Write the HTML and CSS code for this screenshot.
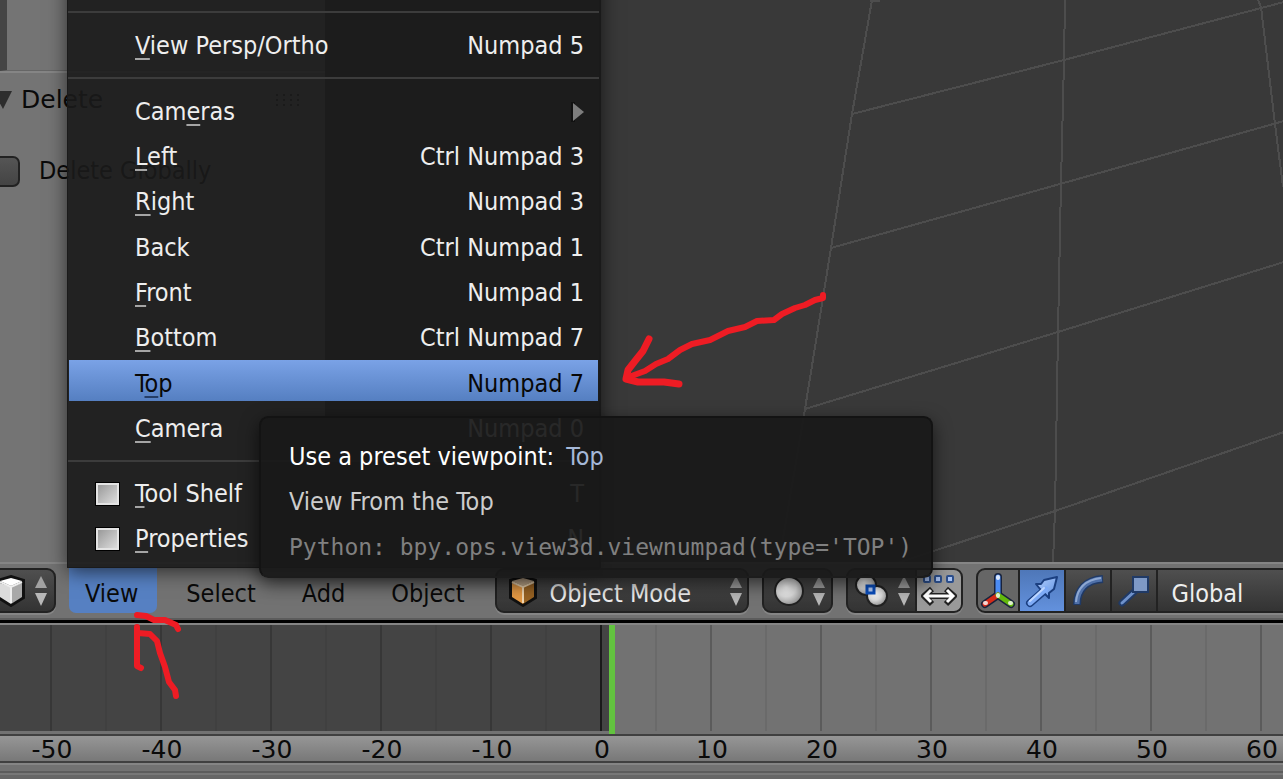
FILE: index.html
```html
<!DOCTYPE html>
<html lang="en">
<head>
<meta charset="utf-8">
<title>3D View</title>
<link rel="stylesheet" href="styles.css">
</head>
<body>
<svg class="defs" width="0" height="0" aria-hidden="true">
  <defs>
    <linearGradient id="blue" x1="0" y1="0" x2="1" y2="1"><stop offset="0" stop-color="#b4d0ff"/><stop offset="1" stop-color="#5c8fe0"/></linearGradient>
    <radialGradient id="ball" cx=".4" cy=".35" r=".7"><stop offset="0" stop-color="#fff"/><stop offset=".5" stop-color="#ddd"/><stop offset="1" stop-color="#888"/></radialGradient>
    <symbol id="updown" viewBox="0 0 14 32"><path d="M7 1L13 13H1Z" fill="#a2a2a2"/><path d="M1 18H13L7 31Z" fill="#b8b8b8"/></symbol>
    <symbol id="cube" viewBox="0 0 30 32"><path d="M15 1L28 5V23L15 31L2 23V5Z" fill="#111" stroke="#111" stroke-width="2"/><path d="M15 3L26 6L15 11L4 6Z" fill="var(--top)"/><path d="M4 8L15 12V29L4 22Z" fill="var(--left)"/><path d="M15 12L26 8V22L15 29Z" fill="var(--right)"/><path d="M4 7L15 12L26 7M15 12V28" fill="none" stroke="var(--edge)" stroke-width="2"/></symbol>
  </defs>
</svg>

<main class="view3d">
  <aside class="shelf">
    <div class="shelf-top"></div>
    <section class="panel">
      <h2 class="panel-title">
        <svg class="fold" width="13" height="18" viewBox="0 0 13 18"><path d="M-7 0H12L3 18Z" fill="#2d2d2d"/></svg>
        <span>Delete</span>
        <svg class="grip" width="26" height="14" viewBox="0 0 26 14"><path d="M1 2H26M1 7H26M1 12H26" stroke="#222" stroke-width="2" stroke-dasharray="2 5"/></svg>
      </h2>
      <label class="option"><input type="checkbox" class="tick"><span>Delete Globally</span></label>
    </section>
  </aside>
  <svg class="grid" aria-hidden="true">
    <g transform="translate(-325 0)" fill="none" stroke="#4d4d4d" stroke-width="2" shape-rendering="crispEdges">
      <path d="M872 0L852 114L831 248L805 409L779 562M1065 0L1064 60L1061 183L1058 332L1055 511L1053 562M1258 0L1261 7L1275 124L1283 187"/>
      <path d="M870 1H880M852 114L1064 60L1284 2M831 248L1060 184L1284 121M805 409L1058 332L1284 262M870 572L1055 511L1284 432"/>
    </g>
  </svg>
</main>

<header class="header">
  <button class="ctl editor-type" aria-label="Editor type">
    <svg class="cube-grey" width="30" height="32"><use href="#cube"/></svg>
    <svg width="14" height="32"><use href="#updown"/></svg>
  </button>
  <nav class="menus">
    <div class="menu-anchor">
      <button class="menu-btn open" aria-expanded="true">View</button>
      <div class="menu" role="menu">
        <hr>
        <button class="item solo"><span><u>V</u>iew Persp/Ortho</span><kbd>Numpad 5</kbd></button>
        <hr>
        <div class="views">
          <button class="item"><span>Cam<u>e</u>ras</span><svg width="13" height="20" viewBox="0 0 13 20"><path d="M0 0H4V20H0Z" fill="#111"/><path d="M2 1L13 10L2 19Z" fill="#7d7d7d"/></svg></button>
          <button class="item"><span><u>L</u>eft</span><kbd>Ctrl Numpad 3</kbd></button>
          <button class="item"><span><u>R</u>ight</span><kbd>Numpad 3</kbd></button>
          <button class="item"><span>Back</span><kbd>Ctrl Numpad 1</kbd></button>
          <button class="item"><span><u>F</u>ront</span><kbd>Numpad 1</kbd></button>
          <button class="item"><span><u>B</u>ottom</span><kbd>Ctrl Numpad 7</kbd></button>
          <button class="item active" aria-describedby="tip"><span>T<u>o</u>p</span><kbd>Numpad 7</kbd></button>
          <button class="item"><span><u>C</u>amera</span><kbd>Numpad 0</kbd></button>
        </div>
        <hr>
        <label class="item check"><input type="checkbox"><span><u>T</u>ool Shelf</span><kbd>T</kbd></label>
        <label class="item check"><input type="checkbox"><span><u>P</u>roperties</span><kbd>N</kbd></label>
        <div class="tooltip" role="tooltip" id="tip">
          <p class="tip-title">Use a preset viewpoint: <b>Top</b></p>
          <p class="tip-text">View From the Top</p>
          <p class="tip-code">Python: bpy.ops.view3d.viewnumpad(type='TOP')</p>
        </div>
      </div>
    </div>
    <button class="menu-btn">Select</button>
    <button class="menu-btn">Add</button>
    <button class="menu-btn">Object</button>
  </nav>
  <div class="ctl mode">
    <svg class="cube-orange" width="30" height="32"><use href="#cube"/></svg>
    <select aria-label="Interaction mode"><option>Object Mode</option></select>
    <svg width="14" height="32"><use href="#updown"/></svg>
  </div>
  <button class="ctl shading" aria-label="Viewport shading">
    <svg width="30" height="30" viewBox="0 0 30 30"><circle cx="15" cy="15" r="14" fill="url(#ball)" stroke="#222" stroke-width="2"/></svg>
    <svg width="14" height="32"><use href="#updown"/></svg>
  </button>
  <div class="group">
    <button class="ctl pivot" aria-label="Pivot point">
      <svg width="34" height="34" viewBox="0 0 34 34"><circle cx="11" cy="11" r="10" fill="url(#ball)" stroke="#222" stroke-width="2"/><circle cx="22" cy="22" r="10" fill="url(#ball)" stroke="#222" stroke-width="2"/><rect x="12" y="12" width="7" height="7" fill="#b9d2ff" stroke="#0a4fc0" stroke-width="3"/></svg>
      <svg width="14" height="32"><use href="#updown"/></svg>
    </button>
    <button class="ctl centers" aria-label="Manipulate center points">
      <svg width="36" height="36" viewBox="0 0 36 36"><g fill="#a9c4f5" stroke="#2c4f8c" stroke-width="2"><rect x="3" y="3" width="6" height="6" rx="1"/><rect x="14" y="3" width="6" height="6" rx="1"/><rect x="26" y="3" width="6" height="6" rx="1"/></g><path d="M11 16L3 23L11 31M25 16L33 23L25 31M4 23H32" fill="none" stroke="#222" stroke-width="6" stroke-linejoin="round"/><path d="M10 17L4 23L10 29M26 17L32 23L26 29M5 23H31" fill="none" stroke="#fff" stroke-width="3"/></svg>
    </button>
  </div>
  <div class="group wide">
    <button class="ctl axes" aria-label="Manipulator">
      <svg width="36" height="38" viewBox="0 0 36 38" fill="none" stroke-linecap="round"><path d="M18 5V22M18 23L5 32M18 23L31 32" stroke="#19233c" stroke-width="8"/><path d="M18 5V22" stroke="#4b8cf5" stroke-width="5"/><path d="M18 23L5 32" stroke="#d42a18" stroke-width="5"/><path d="M18 23L31 32" stroke="#62b80c" stroke-width="5"/><path d="M18 5V6M5 31L6 31M30 31L31 31M18 23V24" stroke="#ffffffcc" stroke-width="4"/></svg>
    </button>
    <button class="ctl on" aria-label="Translate">
      <svg width="34" height="36" viewBox="0 0 34 36" fill="none" stroke-linejoin="round" stroke-linecap="round"><path d="M5 30L20 17" stroke="#1b3f80" stroke-width="8"/><path d="M11 11L16 11L19 7L32 4L29 16L24 20V25L19 20L15 16Z" fill="url(#blue)" stroke="#1b3f80" stroke-width="2"/><path d="M5 30L21 16" stroke="#7eabf6" stroke-width="5"/><path d="M5 28L19 15" stroke="#bed6ff" stroke-width="2"/></svg>
    </button>
    <button class="ctl" aria-label="Rotate">
      <svg width="34" height="36" viewBox="0 0 34 36" fill="none"><path d="M6 32C6 17 15 7 32 6" stroke="#203a66" stroke-width="8"/><path d="M6 31C6 17 15 7 31 6" stroke="#4f70a8" stroke-width="5"/><path d="M5 29C6 16 14 7 30 5" stroke="#8ea8d2" stroke-width="2"/></svg>
    </button>
    <button class="ctl" aria-label="Scale">
      <svg width="34" height="36" viewBox="0 0 34 36" fill="none" stroke-linecap="round"><path d="M5 30L18 18" stroke="#203a66" stroke-width="7"/><path d="M5 30L18 18" stroke="#6f92cb" stroke-width="3"/><rect x="16" y="4" width="15" height="15" fill="#7e99c6" stroke="#203a66" stroke-width="2"/></svg>
    </button>
    <div class="ctl orient"><select aria-label="Transform orientation"><option>Global</option></select></div>
  </div>
</header>

<section class="timeline">
  <div class="track">
    <div class="before"></div>
    <div class="frame"></div>
  </div>
  <div class="ruler">
    <span>-50</span><span>-40</span><span>-30</span><span>-20</span><span>-10</span><span>0</span><span>10</span><span>20</span><span>30</span><span>40</span><span>50</span><span>60</span>
  </div>
  <div class="scroll"></div>
  <div class="foot"></div>
</section>

<svg class="marks" width="840" height="700" aria-hidden="true">
  <g fill="none" stroke="#ee1c24" stroke-width="6" stroke-linecap="round" stroke-linejoin="round">
    <path d="M823 295V298L815 300L805 305L795 308L782 314L774 320L757 321L745 327L728 331L710 340L692 344L680 350L668 359L656 364L645 371L626 378"/>
    <path d="M649 339L643 351L635 361L628 370L626 379L638 382L664 382L679 384" stroke-width="7"/>
    <path d="M137 615L146 616L154 620L165 620L176 625L178 629"/>
    <path d="M137 627V666L141 668M138 633L150 634L157 641L160 653L165 667L169 682L175 690L176 696"/>
  </g>
</svg>
</body>
</html>
```
FILE: styles.css
```css
* { box-sizing: border-box; }

body {
  margin: 0;
  position: relative;
  display: flex;
  flex-direction: column;
  height: 100vh;
  overflow: hidden;
  background: #727272;
  color: #0a0a0a;
  font: 25px/32px "DejaVu Sans Condensed", "DejaVu Sans", sans-serif;
}

button, select, kbd { font: inherit; color: inherit; }
button, select {
  appearance: none;
  border: 0;
  margin: 0;
  padding: 0;
  background: none;
  text-align: left;
}
svg { flex: none; }
.defs { position: absolute; }

/* 3D viewport */
.view3d { flex: 1; display: flex; align-items: stretch; min-height: 0; background: #393939; }
.grid { flex: 1; min-width: 0; height: 100%; }

.shelf { width: 325px; flex: none; background: #747474; }
.shelf-top {
  height: 71px;
  border-left: 7px solid #454545;
  border-bottom: 1px solid #666;
}
.panel { border-top: 2px solid #858585; }
.panel-title {
  display: flex;
  align-items: center;
  gap: 8px;
  margin: 11px 0 0;
  font: 25px/32px "DejaVu Sans", sans-serif;
}
.grip { margin-left: auto; margin-right: 24px; }
.option { display: flex; align-items: center; gap: 19px; margin-top: 39px; }
.tick {
  appearance: none;
  width: 30px;
  height: 31px;
  margin: 0 0 0 -10px;
  border: 2px solid #222;
  border-radius: 7px;
  background: linear-gradient(#555, #444);
}

/* header bar */
.header {
  display: flex;
  flex: none;
  align-items: flex-start;
  gap: 13px;
  padding-top: 4px;
  height: 58px;
  border-top: 2px solid #858585;
  border-bottom: 2px solid #5c5c5c;
  background: #727272;
}
.menus { display: flex; gap: 12px; flex: none; }
.menu-anchor { position: relative; }
.menu-btn { height: 45px; padding: 7px 17px 0; border-radius: 7px; white-space: nowrap; }
.menu-btn.open { padding: 7px 19px 0 16px; border-radius: 0 0 7px 7px; background: #5680c2; }

.ctl {
  display: flex;
  align-items: center;
  justify-content: space-between;
  flex: none;
  height: 45px;
  border: 2px solid #222;
  border-radius: 9px;
  background: linear-gradient(#4f4f4f, #333);
  box-shadow: 0 2px 0 #858585;
  color: #eee;
}
.editor-type { width: 70px; margin-left: -14px; padding: 0 6px 0 8px; }
.mode { width: 254px; padding: 0 4px 0 11px; }
.mode select { flex: 1; margin: 6px 0 0 12px; }
.shading { width: 71px; padding: 0 5px 0 10px; }
.group { display: flex; flex: none; }
.pivot { width: 71px; padding: 0 4px 0 7px; border-radius: 9px 0 0 9px; }
.centers { width: 46px; justify-content: center; border-left: 0; border-radius: 0 9px 9px 0; background: #999; }
.wide { flex: 1; min-width: 0; }
.wide .ctl { width: 46px; justify-content: center; border-left-width: 0; border-radius: 0; }
.wide .axes { width: 44px; border-left-width: 2px; border-radius: 9px 0 0 9px; background: #666; }
.wide .on { background: linear-gradient(#4e77b8, #6391dd); }
.wide .orient { flex: 1; min-width: 0; padding: 6px 14px 0; justify-content: flex-start; border-right: 0; }

.cube-grey { --top: #fff; --left: #dcdcdc; --right: #a8a8a8; --edge: #eee; }
.cube-orange { --top: #cbb294; --left: #e59a45; --right: #9a6424; --edge: #f3d9b4; }

/* drop-up menu */
.menu {
  position: absolute;
  z-index: 2;
  left: -2px;
  bottom: 100%;
  width: 534px;
  padding: 40px 1px 6px;
  border: 1px solid #1a1a1a;
  border-right-width: 2px;
  background: rgba(25, 25, 25, .9);
  box-shadow: 0 4px 18px rgba(0, 0, 0, .6);
  color: #eee;
}
.menu hr { margin: 9px -1px; border: 0; border-top: 2px solid #3c3c3c; }
.views { display: grid; grid-auto-rows: 1fr; min-height: 363px; }
.item {
  display: flex;
  align-items: center;
  justify-content: space-between;
  width: 100%;
  height: 41px;
  padding: 6px 14px 0 66px;
  white-space: nowrap;
}
.item u {
  text-decoration: underline #a5a5a5 2px;
  text-underline-offset: 4px;
  text-decoration-skip-ink: none;
}
.item.solo { height: 46px; padding-top: 2px; }
.item.active { background: linear-gradient(#7aa2e6, #557fc1); color: #080808; }
.item.active u { text-decoration-color: #253d66; }
.item.check { height: 45px; padding: 0 14px 0 27px; }
.item.check span { flex: 1; }
.item input {
  appearance: none;
  width: 23px;
  height: 22px;
  margin: 0 16px 0 0;
  border: 2px solid #e4e4e4;
  outline: 1px solid #000;
  background: linear-gradient(135deg, #999, #ddd);
}

.tooltip {
  position: absolute;
  left: 191px;
  bottom: -11px;
  width: 674px;
  padding: 23px 28px 13px;
  border: 2px solid #131313;
  border-bottom-color: #1c1c1c;
  border-radius: 9px;
  background: rgba(25, 25, 25, .93);
  box-shadow: 0 6px 18px rgba(0, 0, 0, .6);
  white-space: nowrap;
}
.tooltip p { margin: 0 0 13px; }
.tooltip .tip-title { color: #fff; }
.tip-title b { margin-left: 5px; font-weight: normal; color: #a5b8d8; }
.tip-text { color: #ccc; }
.tooltip .tip-code { margin: 0; color: #808080; font: 23px/32px "DejaVu Sans Mono", monospace; }

/* timeline */
.timeline { flex: none; border-top: 3px solid #000; overflow: hidden; }
.track {
  display: flex;
  height: 111px;
  border-top: 2px solid #858585;
  background:
    repeating-linear-gradient(90deg, transparent 0 50px, #5b5b5b 50px 52px, transparent 52px 105px, #6a6a6a 105px 107px, transparent 107px 110px) 0 0 / 100% 106px no-repeat,
    #727272;
}
.before {
  width: 609px;
  height: 106px;
  background:
    linear-gradient(#1a1a1a, #1a1a1a) 600px 0 / 2px 100% no-repeat,
    repeating-linear-gradient(90deg, transparent 0 50px, #373737 50px 52px, transparent 52px 105px, #404040 105px 107px, transparent 107px 110px),
    #444;
}
.frame { width: 6px; background: #62c33f; }
.ruler {
  display: flex;
  height: 29px;
  padding-top: 1px;
  border: solid #404040;
  border-width: 2px 0;
  background: linear-gradient(#969696, #787878);
  font: 25px/26px "DejaVu Sans", sans-serif;
}
.ruler span { flex: none; width: 110px; text-align: center; }
.ruler span:first-child { margin-left: -3px; }
.scroll { height: 10px; border-top: 2px solid #858585; border-bottom: 2px solid #5c5c5c; background: #727272; }
.foot { height: 6px; border-top: 2px solid #777; background: #666; }

.marks { position: absolute; z-index: 3; left: 0; top: 0; pointer-events: none; }
```
